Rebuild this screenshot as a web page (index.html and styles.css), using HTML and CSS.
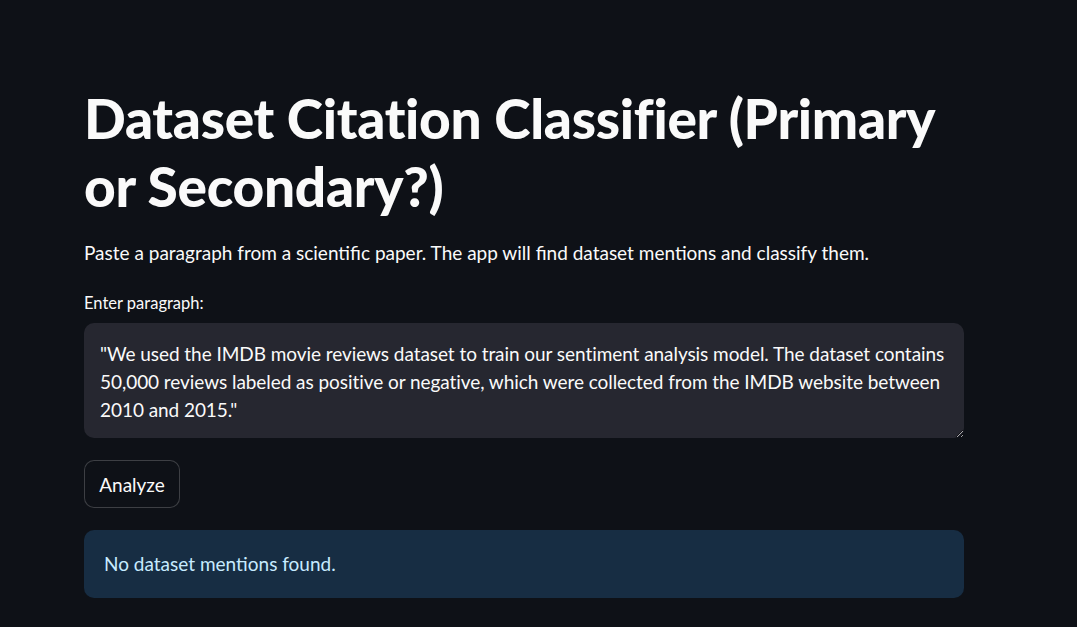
FILE: index.html
```html
<!DOCTYPE html>
<html lang="en">
<head>
<meta charset="utf-8">
<title>Dataset Citation Classifier</title>
<link rel="stylesheet" href="styles.css">
</head>
<body>
<main class="main">
  <h1 class="title">Dataset Citation Classifier (Primary or Secondary?)</h1>
  <p class="intro">Paste a paragraph from a scientific paper. The app will find dataset mentions and classify them.</p>
  <label class="label" for="para">Enter paragraph:</label>
  <div class="textarea-wrap">
    <textarea id="para" class="textarea">"We used the IMDB movie reviews dataset to train our sentiment analysis model. The dataset contains 50,000 reviews labeled as positive or negative, which were collected from the IMDB website between 2010 and 2015."</textarea>
  </div>
  <button class="btn" type="button">Analyze</button>
  <div class="info">No dataset mentions found.</div>
</main>
</body>
</html>
```
FILE: styles.css
```css
html, body {
  margin: 0;
  padding: 0;
  background: #0e1117;
  height: 100%;
}
body {
  font-family: "Lato", "Liberation Sans", sans-serif;
  color: #fafafa;
  overflow: hidden;
}
.main {
  width: 880px;
  margin-left: 84px;
  padding-top: 84px;
  display: flex;
  flex-direction: column;
  align-items: flex-start;
}
.title {
  margin: 0;
  font-size: 55px;
  line-height: 68px;
  font-weight: 900;
  letter-spacing: -0.3px;
}
.intro {
  margin: 19px 0 0;
  font-size: 19px;
  line-height: 28px;
}
.label {
  margin-top: 24px;
  font-size: 16.5px;
  line-height: 24px;
}
.textarea-wrap {
  margin-top: 8px;
  width: 880px;
}
.textarea {
  display: block;
  box-sizing: border-box;
  width: 880px;
  height: 115px;
  background: #262730;
  border: none;
  border-radius: 10px;
  color: #fafafa;
  font-family: inherit;
  font-size: 19px;
  line-height: 28px;
  letter-spacing: -0.06px;
  padding: 17px 12px 17px 16px;
  resize: vertical;
  outline: none;
  overflow: hidden;
}
.btn {
  margin-top: 22px;
  box-sizing: border-box;
  height: 48px;
  width: 96px;
  background: #0e1117;
  border: 1px solid rgba(250, 250, 250, 0.2);
  border-radius: 10px;
  color: #fafafa;
  font-family: inherit;
  font-size: 19px;
  padding: 0;
}
.info {
  margin-top: 22px;
  box-sizing: border-box;
  width: 880px;
  height: 68px;
  background: #172d43;
  border-radius: 10px;
  color: #c7ebff;
  font-size: 19px;
  line-height: 28px;
  padding: 20px 20px;
}
```
